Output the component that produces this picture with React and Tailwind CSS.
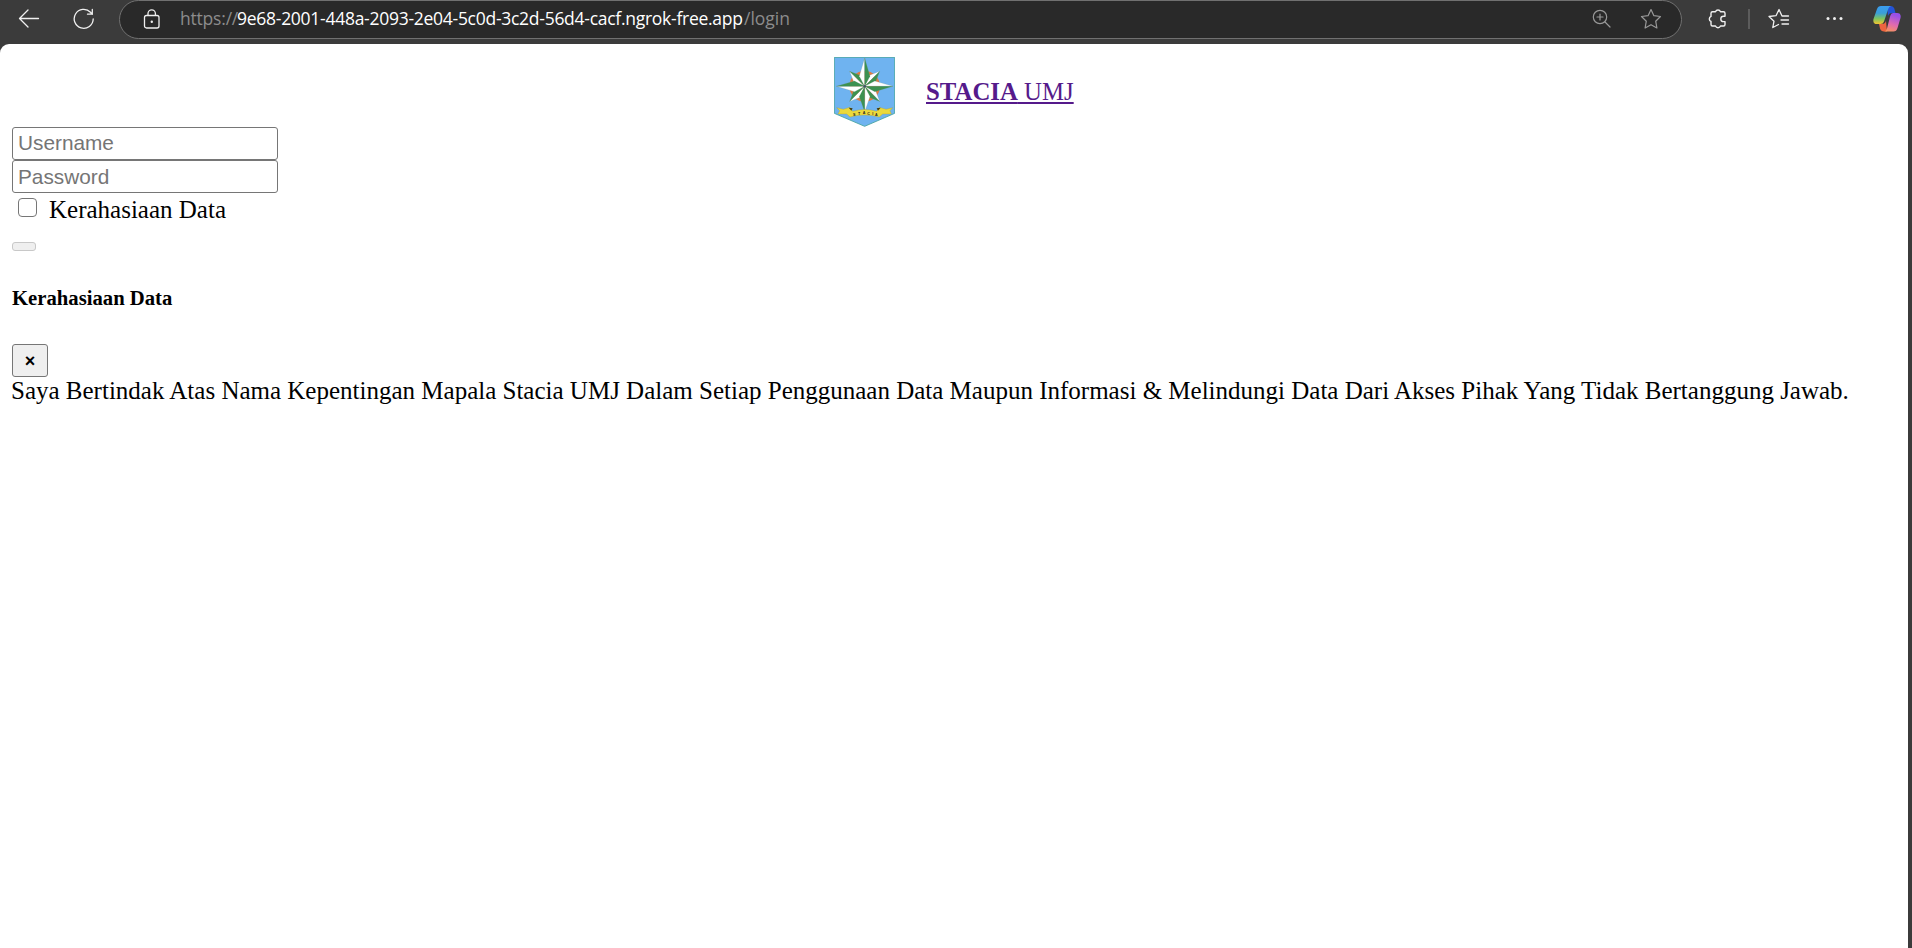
function Emblem() {
  const ray = (a, tip, w, k, key) => (
    <g key={key} transform={`rotate(${a} 92 88)`} stroke="#6f9080" strokeWidth="0.6">
      <path d={`M92 88 L${92 - w} ${88 - w * k} L92 ${88 - tip}Z`} fill="#fff" />
      <path d={`M92 88 L${92 + w} ${88 - w * k} L92 ${88 - tip}Z`} fill="#3c9150" />
    </g>
  );
  const letters = [["S", 61, 177], ["T", 75, 174], ["A", 90, 172], ["C", 104, 173], ["I", 116, 175], ["A", 127, 177]];
  return (
    <svg viewBox="0 0 183 210" className="mt-px h-[70px] w-[61px]">
      <path d="M1 1H182V169L92 208L1 169Z" fill="#6fb3f0" stroke="#3fa09a" strokeWidth="2.5" />
      <circle cx="92" cy="88" r="46" fill="#dd7a42" />
      {[45, 135, 225, 315].map((a) => ray(a, 64, 15, 2, a))}
      {[0, 90, 180, 270].map((a) => ray(a, a === 180 ? 77 : 85, 16, 1.9, a))}
      <circle cx="92" cy="88" r="4" fill="#456" />
      <path d="M8 152L28 157L48 151L56 163Q92 152 128 163L136 151L156 157L176 152L168 161L172 171L146 171L136 180Q92 168 48 180L38 171L12 171L17 161Z" fill="#ecd93c" stroke="#a79a30" strokeWidth="1" />
      <path d="M44 152l12 2l-4 7zM140 152l-12 2l4 7z" fill="#443c12" />
      {letters.map(([c, x, y], i) => (
        <text key={i} x={x} y={y} textAnchor="middle" fontFamily="Liberation Sans" fontWeight="bold" fontSize="11" fill="#222">{c}</text>
      ))}
    </svg>
  );
}

function Copilot() {
  return (
    <svg viewBox="0 0 28 28" className="h-7 w-7">
      <defs>
        <linearGradient id="ca" x1="0" y1="0" x2="0" y2="1">
          <stop offset="0" stopColor="#3b9cf0" /><stop offset=".4" stopColor="#3a9fd8" /><stop offset=".7" stopColor="#7cc460" /><stop offset="1" stopColor="#f2c230" />
        </linearGradient>
        <linearGradient id="cb" x1="0.3" y1="0" x2="0" y2="1">
          <stop offset="0" stopColor="#9a50e8" /><stop offset=".5" stopColor="#e06ab0" /><stop offset="1" stopColor="#fb9a50" />
        </linearGradient>
      </defs>
      <path d="M14 1h4q2.500 0 3.300 2.500L22.500 8H19q-3 0-4 3z" fill="#2454d8" />
      <path d="M14 26.500H11q-3 0-4-3l-1-4.500h4q2 0 3-3z" fill="#ee6440" />
      <path d="M8 1h10q-2 .5-2.800 3L11 16.500Q10.200 19 7.500 19H4Q-.5 19 .5 14L4 4Q5 1 8 1z" fill="url(#ca)" />
      <path d="M20 8h4q4.500 0 3.500 5L24.500 23q-1 3.500-4 3.500H11q2.200-.5 3-3L17.200 11Q18 8 20 8z" fill="url(#cb)" />
    </svg>
  );
}

function Toolbar() {
  return (
    <header className="flex h-11 items-start bg-[#3b3b3b] text-[#f0f0f0]">
      <svg className="ml-[18px] mt-2 h-[22px] w-[22px]" viewBox="0 0 22 22" fill="none" stroke="currentColor" strokeWidth="1.3" strokeLinecap="round" strokeLinejoin="round"><path d="M20.500 10.500H1.500M10 2L1.500 10.500L10 19" /></svg>
      <svg className="ml-[33px] mt-2 h-[22px] w-[22px]" viewBox="0 0 22 22" fill="none" stroke="currentColor" strokeWidth="1.3" strokeLinecap="round" strokeLinejoin="round"><path d="M20.200 11A9.500 9.500 0 1 1 17.500 4.200L19.300 6.200M19.300 1.500V6.200H14.500" /></svg>
      <div className="ml-6 flex h-[39px] w-[1563px] items-center rounded-[20px] border border-[#707070] bg-[#292929]">
        <svg className="mb-0.5 ml-[23px] h-5 w-[18px]" viewBox="0 0 18 20" fill="none" stroke="#f0f0f0" strokeWidth="1.3"><rect x="1.500" y="6.500" width="14.500" height="12.500" rx="2" /><path d="M5 6.500V4.500a3.700 3.700 0 0 1 7.400 0V6.500" /><circle cx="8.800" cy="12.700" r="1.200" fill="#f0f0f0" stroke="none" /></svg>
        <div className="mb-[3px] ml-[19px] flex w-[620px] whitespace-pre font-['Open_Sans',sans-serif] text-[17.5px] leading-6 text-[#8c8c8c]">
          <span className="w-[57px] tracking-[-0.2px]">https://</span>
          <span className="w-[507px] tracking-[-0.27px] text-white">9e68-2001-448a-2093-2e04-5c0d-3c2d-56d4-cacf.ngrok-free.app</span>
          <span>/login</span>
        </div>
        <svg className="mb-0.5 ml-auto h-5 w-5" viewBox="0 0 20 20" fill="none" stroke="#999" strokeWidth="1.2" strokeLinecap="round"><circle cx="8" cy="8" r="6.700" /><path d="M13 13l5 5M8 5v6M5 8h6" /></svg>
        <svg className="mb-0.5 ml-[28px] mr-[19px] h-[22px] w-[22px]" viewBox="0 0 22 22" fill="none" stroke="#999" strokeWidth="1.2" strokeLinejoin="round"><path d="M11 1.500L13.900 7.700L20.500 8.500L15.700 13.200L16.900 20L11 16.700L5.100 20L6.300 13.200L1.500 8.500L8.100 7.700Z" /></svg>
      </div>
      <svg className="ml-[26px] mt-2 h-[22px] w-[22px]" viewBox="0 0 22 22" fill="none" stroke="currentColor" strokeWidth="1.4" strokeLinejoin="round"><path d="M4.500 3.700H7.500a2.700 2.700 0 0 1 5 0H15.500a1.500 1.500 0 0 1 1.500 1.500V8.200H15.500a2.700 2.700 0 0 0 0 5.400H17V16.500a1.500 1.500 0 0 1-1.500 1.500H12.500a2.700 2.700 0 0 1-5 0H4.500a1.500 1.500 0 0 1-1.500-1.500V13.400a2.700 2.700 0 0 1 0-5V5.200a1.500 1.500 0 0 1 1.500-1.500z" /></svg>
      <div className="ml-[18px] mt-[9px] h-5 w-0.5 bg-[#5c5c5c]" />
      <svg className="ml-[18px] mt-2 h-[22px] w-[22px]" viewBox="0 0 22 22" fill="none" stroke="currentColor" strokeWidth="1.3" strokeLinecap="round" strokeLinejoin="round"><path d="M20.500 8H14L11 1.500L8 7.700L1 8.500L6 13.200L4.800 19.500L10.500 16.500M13 12H20.500M14 16H20.500" /></svg>
      <svg className="ml-9 mt-4 h-[5px] w-[17px]" viewBox="0 0 17 5" fill="currentColor"><circle cx="2" cy="2.500" r="1.500" /><circle cx="8.500" cy="2.500" r="1.500" /><circle cx="15" cy="2.500" r="1.500" /></svg>
      <div className="ml-[30px] mt-[5px]"><Copilot /></div>
    </header>
  );
}

export default function App() {
  return (
    <div className="flex h-[948px] w-[1912px] flex-col overflow-hidden bg-[#3b3b3b]">
      <Toolbar />
      <main className="flex w-[1908px] grow flex-col items-start rounded-t-[9px] bg-white px-3 pt-3 font-['Liberation_Serif',serif] text-[25px] leading-[27px] text-black">
        <a className="ml-[822px] flex h-[71px] text-[#551a8b]">
          <Emblem />
          <span className="ml-[31px] mt-[22px] text-[24.8px] underline"><b>STACIA</b> UMJ</span>
        </a>
        <input placeholder="Username" className="h-[33px] w-[266px] rounded-[3px] border border-[#767676] px-[5px] pb-0.5 font-['Liberation_Sans',sans-serif] text-[20.8px] placeholder:text-[#757575]" />
        <input placeholder="Password" className="h-[33px] w-[266px] rounded-[3px] border border-[#767676] px-[5px] font-['Liberation_Sans',sans-serif] text-[20.8px] placeholder:text-[#757575]" />
        <label className="flex h-[34px] items-start">
          <input type="checkbox" className="ml-1.5 mt-[5px] h-[19px] w-[19px] appearance-none rounded-[4px] border-[1.5px] border-[#767676] bg-white" />
          <span className="ml-3 mt-[3px]">Kerahasiaan Data</span>
        </label>
        <button disabled aria-label="submit" className="mt-[15px] h-[9px] w-6 rounded-[3px] border border-[#c8c8c8] bg-[#efefef]" />
        <h5 className="mt-9 text-[20.7px] leading-[23px] font-bold">Kerahasiaan Data</h5>
        <button className="mt-[34px] h-[33px] w-9 rounded-[3px] border border-[#767676] bg-[#efefef] font-['Liberation_Sans',sans-serif] text-[18px] leading-7 font-bold">×</button>
        <p className="-ml-px whitespace-nowrap">Saya Bertindak Atas Nama Kepentingan Mapala Stacia UMJ Dalam Setiap Penggunaan Data Maupun Informasi &amp; Melindungi Data Dari Akses Pihak Yang Tidak Bertanggung Jawab.</p>
      </main>
    </div>
  );
}
